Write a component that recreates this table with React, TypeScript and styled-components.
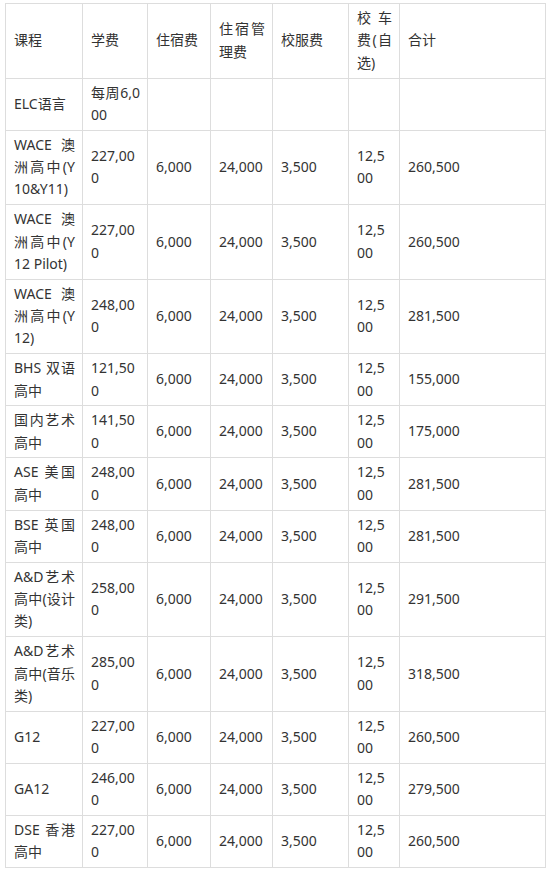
import React from "react";
import styled, { createGlobalStyle } from "styled-components";

const GlobalStyle = createGlobalStyle`
  html, body {
    margin: 0;
    padding: 0;
    background: #ffffff;
  }
`;

const Page = styled.div`
  padding: 3px 5px;
  font-family: "Noto Sans", "Noto Sans CJK SC", sans-serif;
  color: #333333;
`;

const Table = styled.table`
  width: 540px;
  table-layout: fixed;
  border-collapse: collapse;
  font-size: 14px;
  line-height: 22.4px;
`;

const Cell = styled.td`
  border: 1px solid #dddddd;
  padding: 3px 7px 3.3px 8px;
  vertical-align: middle;
  text-align: justify;
  word-break: break-all;
  overflow-wrap: anywhere;
`;

const widths = [77, 65, 63, 62, 76, 51, 146];

const header = ["课程", "学费", "住宿费", "住宿管理费", "校服费", "校车费(自选)", "合计"];

const rows: string[][] = [
  ["ELC语言", "每周6,000", "", "", "", "", ""],
  ["WACE 澳洲高中(Y10&Y11)", "227,000", "6,000", "24,000", "3,500", "12,500", "260,500"],
  ["WACE 澳洲高中(Y12 Pilot)", "227,000", "6,000", "24,000", "3,500", "12,500", "260,500"],
  ["WACE 澳洲高中(Y12)", "248,000", "6,000", "24,000", "3,500", "12,500", "281,500"],
  ["BHS 双语高中", "121,500", "6,000", "24,000", "3,500", "12,500", "155,000"],
  ["国内艺术高中", "141,500", "6,000", "24,000", "3,500", "12,500", "175,000"],
  ["ASE 美国高中", "248,000", "6,000", "24,000", "3,500", "12,500", "281,500"],
  ["BSE 英国高中", "248,000", "6,000", "24,000", "3,500", "12,500", "281,500"],
  ["A&D艺术高中(设计类)", "258,000", "6,000", "24,000", "3,500", "12,500", "291,500"],
  ["A&D艺术高中(音乐类)", "285,000", "6,000", "24,000", "3,500", "12,500", "318,500"],
  ["G12", "227,000", "6,000", "24,000", "3,500", "12,500", "260,500"],
  ["GA12", "246,000", "6,000", "24,000", "3,500", "12,500", "279,500"],
  ["DSE 香港高中", "227,000", "6,000", "24,000", "3,500", "12,500", "260,500"],
];

export default function App() {
  return (
    <>
      <GlobalStyle />
      <Page>
        <Table>
          <colgroup>
            {widths.map((w, i) => (
              <col key={i} style={{ width: `${w}px` }} />
            ))}
          </colgroup>
          <tbody>
            <tr>
              {header.map((h, i) => (
                <Cell key={i}>{h}</Cell>
              ))}
            </tr>
            {rows.map((r, ri) => (
              <tr key={ri}>
                {r.map((c, ci) => (
                  <Cell key={ci}>{c}</Cell>
                ))}
              </tr>
            ))}
          </tbody>
        </Table>
      </Page>
    </>
  );
}
